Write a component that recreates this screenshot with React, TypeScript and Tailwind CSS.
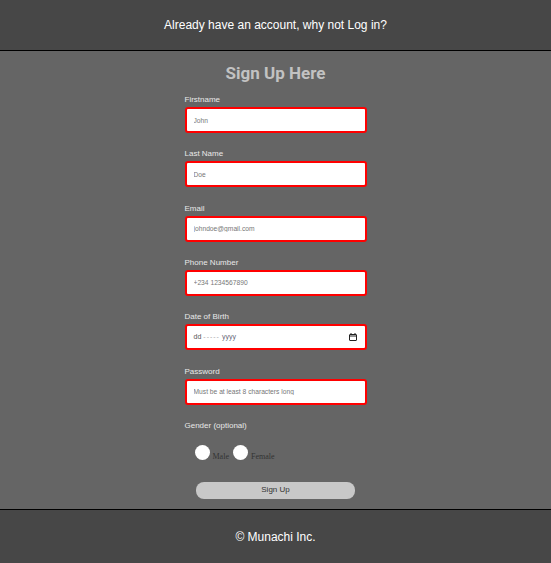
import React from 'react';

const fields = [
  { label: 'Firstname', type: 'text', placeholder: 'John' },
  { label: 'Last Name', type: 'text', placeholder: 'Doe' },
  { label: 'Email', type: 'email', placeholder: 'johndoe@gmail.com' },
  { label: 'Phone Number', type: 'tel', placeholder: '+234 1234567890' },
];

const inputCls =
  'mt-[2px] h-[26px] w-full bg-white border-2 border-[#ff0000] rounded-[3px] px-[7px] text-[6.7px] text-[#333] placeholder:text-[#777] outline-none';

export default function App() {
  return (
    <div className="min-h-screen flex flex-col bg-[#656565] font-['Liberation_Sans',Arial,sans-serif]">
      {/* header */}
      <header className="h-[51px] bg-[#474747] border-b border-black flex items-center justify-center">
        <p className="text-white text-[12px]">Already have an account, why not Log in?</p>
      </header>

      <main className="h-[458px] pt-[12px]">
        <h1 className="text-center text-[17px] leading-[20px] font-bold text-[#c2c2c2] font-['Roboto',sans-serif]">
          Sign Up Here
        </h1>

        <form className="w-[182px] mx-auto mt-[12px] flex flex-col" onSubmit={e => e.preventDefault()}>
          {fields.map(f => (
            <label key={f.label} className="flex flex-col mb-[16.33px]">
              <span className="h-[10px] leading-[10px] text-[8px] text-[#e8e8e8]">{f.label}</span>
              <input type={f.type} placeholder={f.placeholder} className={inputCls} />
            </label>
          ))}

          {/* date of birth */}
          <label className="flex flex-col mb-[16.33px]">
            <span className="h-[10px] leading-[10px] text-[8px] text-[#e8e8e8]">Date of Birth</span>
            <div className="mt-[2px] h-[26px] w-full bg-white border-2 border-[#ff0000] rounded-[3px] pl-[7px] pr-[8px] flex items-center text-[7px]">
              <span className="text-[#555]">dd</span>
              <span className="text-[#aaa] tracking-[1px] mx-[2px]">-----</span>
              <span className="text-[#667]">yyyy</span>
              <svg className="ml-auto" width="8" height="8" viewBox="0 0 8 8" fill="none" stroke="#222" strokeWidth="1">
                <rect x="0.5" y="1.5" width="7" height="6" rx="0.5" />
                <line x1="0.5" y1="3" x2="7.5" y2="3" />
                <line x1="2" y1="0" x2="2" y2="1.5" />
                <line x1="6" y1="0" x2="6" y2="1.5" />
              </svg>
            </div>
          </label>

          <label className="flex flex-col mb-[16.33px]">
            <span className="h-[10px] leading-[10px] text-[8px] text-[#e8e8e8]">Password</span>
            <input type="password" placeholder="Must be at least 8 characters long" className={inputCls} />
          </label>

          <span className="h-[10px] leading-[10px] text-[8px] text-[#e8e8e8]">Gender (optional)</span>

          <div className="mt-[14px] ml-[10px] flex items-end font-['Liberation_Serif',serif] text-[8px] leading-[8px] text-[#333]">
            <label className="flex items-end">
              <input type="radio" name="gender" className="appearance-none w-[15px] h-[15px] rounded-full bg-white" />
              <span className="ml-[3px] mb-[-1px]">Male</span>
            </label>
            <label className="flex items-end ml-[4px]">
              <input type="radio" name="gender" className="appearance-none w-[15px] h-[15px] rounded-full bg-white" />
              <span className="ml-[3px] mb-[-1px]">Female</span>
            </label>
          </div>

          <button
            type="submit"
            className="mt-[22px] self-center w-[159px] h-[17px] rounded-lg bg-[#c8c8c8] text-[8px] text-[#333]"
          >
            Sign Up
          </button>
        </form>
      </main>

      {/* footer */}
      <footer className="h-[54px] bg-[#474747] border-t border-black flex items-center justify-center">
        <p className="text-white text-[12px]">© Munachi Inc.</p>
      </footer>
    </div>
  );
}
